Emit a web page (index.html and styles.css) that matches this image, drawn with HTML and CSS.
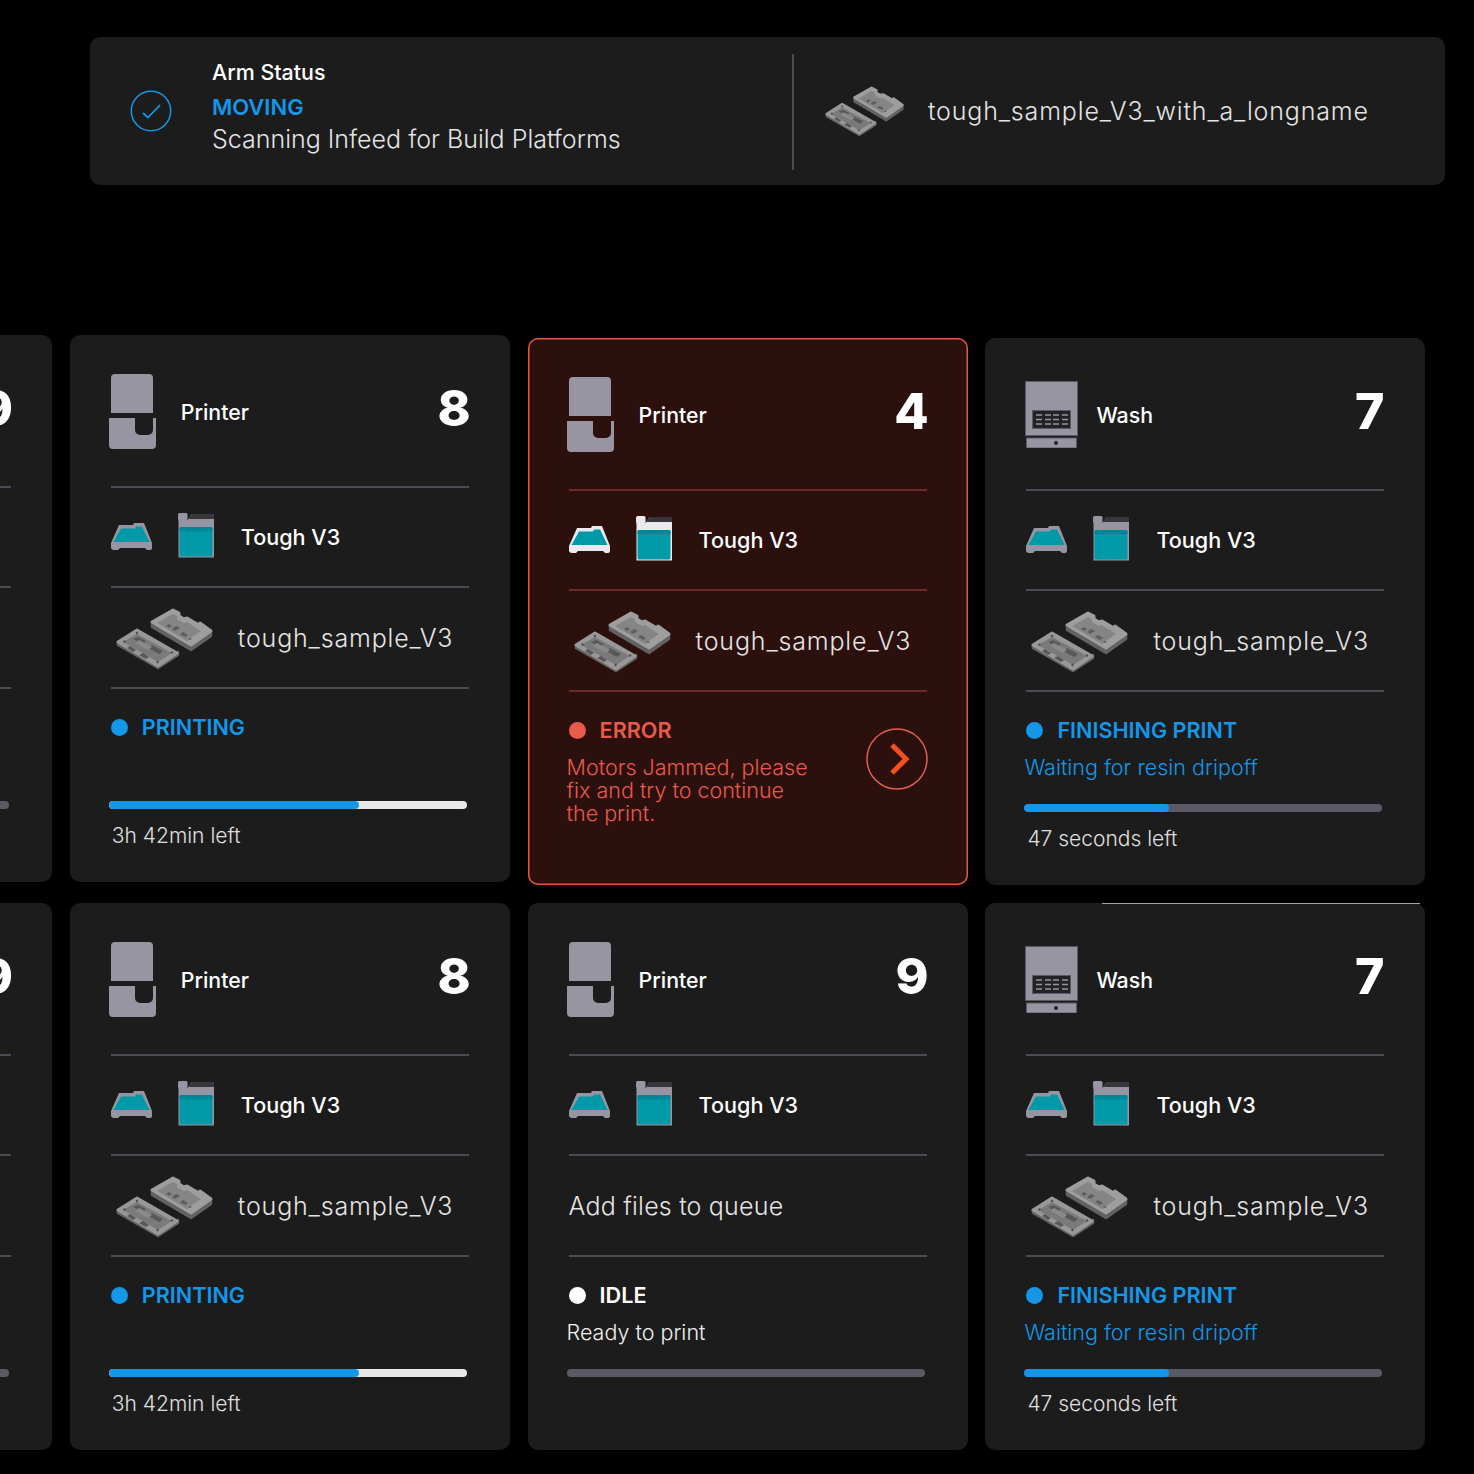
FILE: index.html
```html
<!DOCTYPE html>
<html lang="en">
<head>
  <meta charset="UTF-8" />
  <meta name="viewport" content="width=device-width, initial-scale=1.0" />
  <title>Fleet Status</title>
  <link rel="stylesheet" href="styles.css">
</head>
<body>
  <svg class="sprites" width="0" height="0" aria-hidden="true">
    <symbol id="printer" viewBox="0 0 47 75">
      <path d="M2 39V4a4 4 0 0 1 4-4h34a4 4 0 0 1 4 4v35z" fill="#9695a1"/>
      <path d="M0 44h26v12a5 5 0 0 0 5 5h8a5 5 0 0 0 5-5V44h3v27a4 4 0 0 1-4 4H4a4 4 0 0 1-4-4z" fill="#9695a1"/>
    </symbol>
    <symbol id="wash" viewBox="0 0 53 67">
      <rect x="0.5" y="0.5" width="52" height="54" fill="#9695a1" stroke="#5a5966"/>
      <rect x="7.5" y="29.5" width="38" height="18" fill="#232326" stroke="#5a5966"/>
      <path d="M11 34h6M20 34h6M28 34h6M37 34h6M11 38.500h6M20 38.500h6M28 38.500h6M37 38.500h6M11 43h6M20 43h6M28 43h6M37 43h6" stroke="#9695a1" stroke-width="1.600"/>
      <rect x="1.500" y="57" width="50" height="10" fill="#9695a1" stroke="#5a5966"/>
      <circle cx="31" cy="62" r="2" fill="#232326"/>
    </symbol>
    <symbol id="vat" viewBox="0 0 41 28">
      <path d="M8 2h14l1-2h10l8 20v5a2 2 0 0 1-2 2h-3l-2-2H9l-2 2H3a3 3 0 0 1-3-2v-5z" fill="currentColor"/>
      <path d="M10 5.500h14l1-2h6l7.500 15.500H2.500z" fill="#0099a8"/>
    </symbol>
    <symbol id="bottle" viewBox="0 0 36 45">
      <path d="M0.500 7h9l4-6h22.500v43.500H0.500z" fill="currentColor"/>
      <rect x="0" y="0" width="9.500" height="7.500" rx="1.500" fill="currentColor"/>
      <path class="bottle-band" d="M13.500 1h22.500v5H10z"/>
      <rect x="1.500" y="14" width="33" height="29.500" rx="1.500" fill="#0099a8"/>
      <rect x="1.500" y="14" width="33" height="4.500" rx="1.500" fill="#008896"/>
    </symbol>
    <symbol id="part" viewBox="0 0 98 62">
      <path d="M2 34v3l40 23 20-13v-3L42 57z" fill="#626262" stroke="#626262" stroke-width="2.500" stroke-linejoin="round"/>
      <path d="M2 34l19-12 40 23-19 13z" fill="#989898" stroke="#989898" stroke-width="3" stroke-linejoin="round"/>
      <path d="M7 34l14-8 35 19-14 9z" fill="#7a7a7a"/>
      <path d="M22 29l8 4-4 3-9-5zM36 37l11 6-4 3-11-6zM14 38l6 4-3 2-6-4zM27 45l6 4-3 2-7-4z" fill="#585858"/>
      <path d="M19 35l13 7 4-3-13-7z" fill="#8a8a8a"/>
      <circle cx="8.500" cy="33.500" r="1.200" fill="#505050"/>
      <circle cx="41.500" cy="54" r="1.200" fill="#505050"/>
      <circle cx="56" cy="44.500" r="1.200" fill="#505050"/>
      <circle cx="21" cy="25" r="1.200" fill="#505050"/>
      <path d="M36 14v5l39 23 20-14v-4L75 38z" fill="#626262" stroke="#626262" stroke-width="2.500" stroke-linejoin="round"/>
      <path d="M36 14L57 2l6 3v3l5 3 3-1 12 7 1-2 11 8-20 14z" fill="#9e9e9e" stroke="#9e9e9e" stroke-width="3" stroke-linejoin="round"/>
      <path d="M41 15l16-9 4 2v3l7 4 3-1 14 9-10 7-4 3z" fill="#858585"/>
      <path d="M50 18l3-2 3 2-3 2zM56 21l4-3 4 2-5 3zM64 26l3-2 5 3-3 2zM72 31l2-1 2 1-2 1z" fill="#5e5e5e"/>
    </symbol>
  </svg>

  <section class="arm-panel">
    <div class="arm-status">
      <svg class="check-icon" viewBox="0 0 42 42">
        <circle cx="21" cy="21" r="19.700" fill="none" stroke="#1497e8" stroke-width="1.500"/>
        <path d="M13 23l5 4.500 12-12.500" fill="none" stroke="#1497e8" stroke-width="1.800"/>
      </svg>
      <div class="arm-text">
        <div class="arm-title">Arm Status</div>
        <div class="arm-state">MOVING</div>
        <div class="arm-detail">Scanning Infeed for Build Platforms</div>
      </div>
    </div>
    <div class="arm-file">
      <svg class="part-small"><use href="#part"/></svg>
      <span class="file-name">tough_sample_V3_with_a_longname</span>
    </div>
  </section>

  <main class="grid">
    <!-- row 1 -->
    <article class="card raised">
      <header class="card-head">
        <span class="head-icon"><svg class="icon-printer"><use href="#printer"/></svg></span>
        <span class="head-label">Printer</span>
        <span class="head-num">9</span>
      </header>
      <div class="row row-material">
        <svg class="icon-vat"><use href="#vat"/></svg>
        <svg class="icon-bottle"><use href="#bottle"/></svg>
        <span class="material">Tough V3</span>
      </div>
      <div class="row row-file">
        <svg class="icon-part"><use href="#part"/></svg>
        <span class="file-name">tough_sample_V3</span>
      </div>
      <div class="state">
        <div class="state-line"><i class="dot dot-white"></i>IDLE</div>
      </div>
      <div class="bar"></div>
    </article>

    <article class="card raised">
      <header class="card-head">
        <span class="head-icon"><svg class="icon-printer"><use href="#printer"/></svg></span>
        <span class="head-label">Printer</span>
        <span class="head-num">8</span>
      </header>
      <div class="row row-material">
        <svg class="icon-vat"><use href="#vat"/></svg>
        <svg class="icon-bottle"><use href="#bottle"/></svg>
        <span class="material">Tough V3</span>
      </div>
      <div class="row row-file">
        <svg class="icon-part"><use href="#part"/></svg>
        <span class="file-name">tough_sample_V3</span>
      </div>
      <div class="state">
        <div class="state-line is-blue"><i class="dot"></i>PRINTING</div>
      </div>
      <div class="bar bar-light"><div class="bar-fill" style="width: 70%"></div></div>
      <div class="time-left">3h 42min left</div>
    </article>

    <article class="card card-error">
      <header class="card-head">
        <span class="head-icon"><svg class="icon-printer"><use href="#printer"/></svg></span>
        <span class="head-label">Printer</span>
        <span class="head-num">4</span>
      </header>
      <div class="row row-material">
        <svg class="icon-vat"><use href="#vat"/></svg>
        <svg class="icon-bottle"><use href="#bottle"/></svg>
        <span class="material">Tough V3</span>
      </div>
      <div class="row row-file">
        <svg class="icon-part"><use href="#part"/></svg>
        <span class="file-name">tough_sample_V3</span>
      </div>
      <div class="error-body">
        <div class="state">
          <div class="state-line"><i class="dot"></i>ERROR</div>
          <div class="state-desc">Motors Jammed, please<br>fix and try to continue<br>the print.</div>
        </div>
        <svg class="error-btn" viewBox="0 0 62 62">
          <circle cx="31" cy="31" r="30" fill="none" stroke="#e0604f" stroke-width="1.500"/>
          <path d="M26 17l14 14-14 14" fill="none" stroke="#f4501e" stroke-width="5"/>
        </svg>
      </div>
    </article>

    <article class="card">
      <header class="card-head">
        <span class="head-icon"><svg class="icon-wash"><use href="#wash"/></svg></span>
        <span class="head-label">Wash</span>
        <span class="head-num num-seven">7</span>
      </header>
      <div class="row row-material">
        <svg class="icon-vat"><use href="#vat"/></svg>
        <svg class="icon-bottle"><use href="#bottle"/></svg>
        <span class="material">Tough V3</span>
      </div>
      <div class="row row-file">
        <svg class="icon-part"><use href="#part"/></svg>
        <span class="file-name">tough_sample_V3</span>
      </div>
      <div class="state">
        <div class="state-line is-blue"><i class="dot"></i>FINISHING PRINT</div>
        <div class="state-desc is-blue">Waiting for resin dripoff</div>
      </div>
      <div class="bar"><div class="bar-fill" style="width: 40.500%"></div></div>
      <div class="time-left">47 seconds left</div>
    </article>

    <!-- row 2 -->
    <article class="card">
      <header class="card-head">
        <span class="head-icon"><svg class="icon-printer"><use href="#printer"/></svg></span>
        <span class="head-label">Printer</span>
        <span class="head-num">9</span>
      </header>
      <div class="row row-material">
        <svg class="icon-vat"><use href="#vat"/></svg>
        <svg class="icon-bottle"><use href="#bottle"/></svg>
        <span class="material">Tough V3</span>
      </div>
      <div class="row row-file">
        <svg class="icon-part"><use href="#part"/></svg>
        <span class="file-name">tough_sample_V3</span>
      </div>
      <div class="state">
        <div class="state-line"><i class="dot dot-white"></i>IDLE</div>
      </div>
      <div class="bar"></div>
    </article>

    <article class="card">
      <header class="card-head">
        <span class="head-icon"><svg class="icon-printer"><use href="#printer"/></svg></span>
        <span class="head-label">Printer</span>
        <span class="head-num">8</span>
      </header>
      <div class="row row-material">
        <svg class="icon-vat"><use href="#vat"/></svg>
        <svg class="icon-bottle"><use href="#bottle"/></svg>
        <span class="material">Tough V3</span>
      </div>
      <div class="row row-file">
        <svg class="icon-part"><use href="#part"/></svg>
        <span class="file-name">tough_sample_V3</span>
      </div>
      <div class="state">
        <div class="state-line is-blue"><i class="dot"></i>PRINTING</div>
      </div>
      <div class="bar bar-light"><div class="bar-fill" style="width: 70%"></div></div>
      <div class="time-left">3h 42min left</div>
    </article>

    <article class="card">
      <header class="card-head">
        <span class="head-icon"><svg class="icon-printer"><use href="#printer"/></svg></span>
        <span class="head-label">Printer</span>
        <span class="head-num">9</span>
      </header>
      <div class="row row-material">
        <svg class="icon-vat"><use href="#vat"/></svg>
        <svg class="icon-bottle"><use href="#bottle"/></svg>
        <span class="material">Tough V3</span>
      </div>
      <div class="row row-file">
        <span class="file-name queue-hint">Add files to queue</span>
      </div>
      <div class="state">
        <div class="state-line"><i class="dot dot-white"></i>IDLE</div>
        <div class="state-desc">Ready to print</div>
      </div>
      <div class="bar"></div>
    </article>

    <article class="card card-line">
      <header class="card-head">
        <span class="head-icon"><svg class="icon-wash"><use href="#wash"/></svg></span>
        <span class="head-label">Wash</span>
        <span class="head-num num-seven">7</span>
      </header>
      <div class="row row-material">
        <svg class="icon-vat"><use href="#vat"/></svg>
        <svg class="icon-bottle"><use href="#bottle"/></svg>
        <span class="material">Tough V3</span>
      </div>
      <div class="row row-file">
        <svg class="icon-part"><use href="#part"/></svg>
        <span class="file-name">tough_sample_V3</span>
      </div>
      <div class="state">
        <div class="state-line is-blue"><i class="dot"></i>FINISHING PRINT</div>
        <div class="state-desc is-blue">Waiting for resin dripoff</div>
      </div>
      <div class="bar"><div class="bar-fill" style="width: 40.500%"></div></div>
      <div class="time-left">47 seconds left</div>
    </article>
  </main>
</body>
</html>
```

FILE: styles.css
```css
html, body {
  margin: 0;
  padding: 0;
  background-color: #000;
}

body {
  font-family: 'Inter', 'Liberation Sans', sans-serif;
  color: #fff;
  width: 1474px;
  height: 1474px;
  overflow: hidden;
}

.sprites {
  display: block;
  height: 0;
}

svg {
  display: block;
  flex: none;
}

/* top panel */
.arm-panel {
  display: flex;
  align-items: center;
  box-sizing: border-box;
  height: 148px;
  margin: 37px 29px 0 90px;
  background-color: #1c1c1c;
  border-radius: 10px;
}

.arm-status {
  display: flex;
  align-items: center;
  width: 704px;
  height: 116px;
  margin-top: 2px;
  border-right: 2px solid #4c4b55;
  box-sizing: border-box;
  padding-left: 40px;
}

.check-icon {
  width: 42px;
  height: 42px;
  margin-right: 40px;
  margin-top: -2px;
}

.arm-text {
  margin-top: -11px;
}

.arm-title {
  font-size: 21.400px;
  font-weight: 500;
  line-height: 26px;
}

.arm-state {
  font-size: 22px;
  font-weight: 600;
  line-height: 26px;
  margin-top: 9.500px;
  color: #1497e8;
}

.arm-detail {
  font-size: 25px;
  font-weight: 300;
  line-height: 30px;
  margin-top: 4px;
  color: #e4e4e4;
}

.arm-file {
  display: flex;
  align-items: center;
  padding-left: 31px;
}

.part-small {
  width: 80px;
  height: 51px;
  margin-right: 23px;
}

/* card grid */
.grid {
  display: grid;
  grid-template-columns: repeat(4, 440px);
  grid-template-rows: repeat(2, 547px);
  gap: 18px 17.800px;
  margin: 153px 0 0 -388px;
}

.card {
  position: relative;
  height: 547px;
  box-sizing: border-box;
  padding: 0 41px;
  background-color: #1c1c1c;
  border-radius: 10px;
  color: #fff;
}

.raised {
  margin-top: -3px;
}

.card-line::before {
  content: "";
  position: absolute;
  top: 0;
  left: 117px;
  right: 5px;
  height: 1px;
  background-color: #a5a5a8;
}

.card-head,
.row {
  display: flex;
  align-items: center;
  box-sizing: border-box;
  border-bottom: 2px solid #4c4b55;
  color: #9695a1;
}

.card-head {
  height: 153px;
}

.row-material {
  height: 100px;
}

.row-file {
  height: 101px;
}

.head-icon {
  display: flex;
  width: 72px;
  margin-left: -2px;
  margin-top: 1px;
}

.icon-printer {
  width: 47px;
  height: 75px;
}

.icon-wash {
  width: 53px;
  height: 67px;
  margin-left: 1px;
}

.head-label {
  margin-top: 3px;
  font-size: 21.300px;
  font-weight: 500;
  color: #fff;
}

.head-num {
  margin-left: auto;
  margin-right: -2px;
  margin-top: -5px;
  font-size: 50px;
  font-weight: 800;
  line-height: 60px;
  color: #fff;
}

.num-seven {
  margin-right: 0;
}

.icon-vat {
  width: 41px;
  height: 28px;
  margin-right: 26px;
}

.icon-bottle {
  width: 36px;
  height: 45px;
  margin-right: 27px;
  margin-top: -4px;
}

.bottle-band {
  fill: #36363c;
}

.material {
  font-size: 21.600px;
  font-weight: 500;
  color: #fff;
}

.icon-part {
  width: 98px;
  height: 62px;
  margin-left: 5px;
  margin-right: 24px;
  margin-top: 2px;
}

.file-name {
  font-size: 25px;
  font-weight: 300;
  letter-spacing: 0.850px;
  color: #e4e4e4;
}

.queue-hint {
  letter-spacing: 0.200px;
}

.state {
  height: 112px;
  box-sizing: border-box;
  padding-top: 25px;
}

.state-line {
  display: flex;
  align-items: center;
  font-size: 21.600px;
  font-weight: 600;
  line-height: 26px;
}

.dot {
  width: 17px;
  height: 17px;
  margin-right: 14px;
  border-radius: 50%;
  background-color: currentColor;
}

.dot-white {
  background-color: #fff;
}

.state-desc {
  margin: 13px 0 0 -2px;
  font-size: 21.500px;
  font-weight: 300;
  line-height: 23px;
  color: #f0f0f0;
}

.is-blue {
  color: #1497e8;
}

.bar {
  height: 8px;
  width: 358px;
  margin-left: -2px;
  border-radius: 4px;
  background-color: #5a5966;
  overflow: hidden;
}

.bar-light {
  background-color: #e8e8e8;
}

.bar-fill {
  height: 100%;
  background-color: #1497e8;
  border-radius: 4px;
}

.time-left {
  margin: 14px 0 0 1px;
  font-size: 21px;
  font-weight: 300;
  line-height: 26px;
  color: #e0e0e0;
}

/* error variant */
.card-error {
  background-color: #2c100e;
  box-shadow: inset 0 0 0 1.5px #e8553f;
}

.card-error .card-head,
.card-error .row {
  border-bottom-color: #6e2a24;
}

.card-error .row-material {
  color: #e9e9ee;
}

.card-error .bottle-band {
  fill: #d2d2d8;
}

.card-error .state-line,
.card-error .state-desc {
  color: #e85a4a;
}

.error-body {
  display: flex;
  justify-content: space-between;
}

.error-btn {
  width: 62px;
  height: 62px;
  margin-top: 36px;
  margin-right: -1px;
}
```
